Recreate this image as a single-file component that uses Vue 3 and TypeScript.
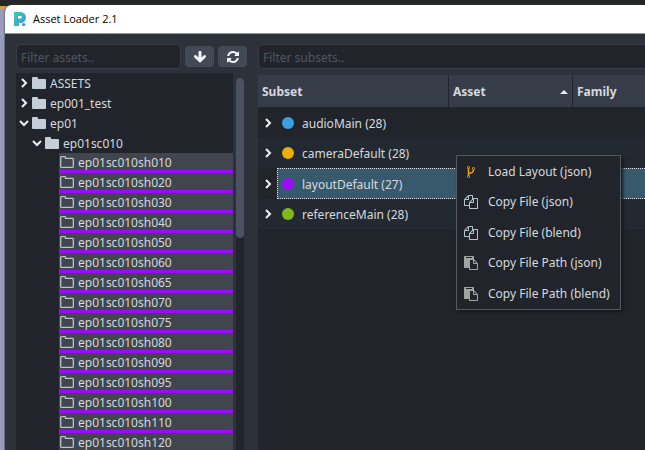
<script setup lang="ts">
import { ref } from 'vue'

interface Folder {
  name: string
  depth: number
  open: boolean
}

interface Subset {
  name: string
  color: string
}

interface Action {
  label: string
  icon: 'fork' | 'copy' | 'paste'
}

const assetFilter = ref('')
const subsetFilter = ref('')
const selected = ref('layoutDefault (27)')

const folders: Folder[] = [
  { name: 'ASSETS', depth: 0, open: false },
  { name: 'ep001_test', depth: 0, open: false },
  { name: 'ep01', depth: 0, open: true },
  { name: 'ep01sc010', depth: 1, open: true },
]

const shots: string[] = [
  '010', '020', '030', '040', '050', '060', '065', '070',
  '075', '080', '090', '095', '100', '110', '120',
].map((n) => `ep01sc010sh${n}`)

const subsets: Subset[] = [
  { name: 'audioMain (28)', color: '#3b9fe0' },
  { name: 'cameraDefault (28)', color: '#eaae05' },
  { name: 'layoutDefault (27)', color: '#9b0bff' },
  { name: 'referenceMain (28)', color: '#82b71c' },
]

const actions: Action[] = [
  { label: 'Load Layout (json)', icon: 'fork' },
  { label: 'Copy File (json)', icon: 'copy' },
  { label: 'Copy File (blend)', icon: 'copy' },
  { label: 'Copy File Path (json)', icon: 'paste' },
  { label: 'Copy File Path (blend)', icon: 'paste' },
]

const glyphs: Record<Action['icon'], string> = {
  fork: 'M672 1472q0-40-28-68t-68-28-68 28-28 68 28 68 68 28 68-28 28-68zm0-1152q0-40-28-68t-68-28-68 28-28 68 28 68 68 28 68-28 28-68zm640 128q0-40-28-68t-68-28-68 28-28 68 28 68 68 28 68-28 28-68zm96 0q0 52-26 96.5t-70 69.5q-2 287-226 414-67 38-203 81-128 40-169.5 71t-41.5 100v26q44 25 70 69.5t26 96.5q0 80-56 136t-136 56-136-56-56-136q0-52 26-96.5t70-69.5v-820q-44-25-70-69.5t-26-96.5q0-80 56-136t136-56 136 56 56 136q0 52-26 96.5t-70 69.5v497q54-26 154-57 55-17 87.5-29.5t70.5-31 59-39.5 40.5-51 28-69.5 8.5-91.5q-44-25-70-69.5t-26-96.5q0-80 56-136t136-56 136 56 56 136z',
  copy: 'M1696 384q40 0 68 28t28 68v1216q0 40-28 68t-68 28h-960q-40 0-68-28t-28-68v-288h-544q-40 0-68-28t-28-68v-672q0-40 20-88t48-76l408-408q28-28 76-48t88-20h416q40 0 68 28t28 68v328q68-40 128-40h416zm-544 213l-299 299h299v-299zm-640-384l-299 299h299v-299zm196 647l316-316v-416h-384v416q0 40-28 68t-68 28h-416v640h512v-256q0-40 20-88t48-76zm956 804v-1152h-384v416q0 40-28 68t-68 28h-416v640h896z',
  paste: 'M768 1664h896v-640h-416q-40 0-68-28t-28-68v-416h-384v1152zm256-1440v-64q0-13-9.5-22.5t-22.5-9.5h-704q-13 0-22.5 9.5t-9.5 22.5v64q0 13 9.5 22.5t22.5 9.5h704q13 0 22.5-9.5t9.5-22.5zm256 672h299l-299-299v299zm512 128v672q0 40-28 68t-68 28h-960q-40 0-68-28t-28-68v-160h-544q-40 0-68-28t-28-68v-1344q0-40 28-68t68-28h1088q40 0 68 28t28 68v328q21 13 36 28l408 408q28 28 48 76t20 88z',
}
</script>

<template>
  <div class="desktop">
    <main class="window">
      <header class="titlebar">
        <svg class="logo" viewBox="0 0 14 16" aria-hidden="true">
          <defs>
            <linearGradient id="logo-fill" x1="0" y1="0" x2="1" y2="1">
              <stop offset="0" stop-color="#3fc6b4" />
              <stop offset="1" stop-color="#3a9cdc" />
            </linearGradient>
          </defs>
          <path
            fill="url(#logo-fill)"
            fill-rule="evenodd"
            d="M1 1H7.500A5.500 5.500 0 0 1 7.500 12H6V15H1zM5 5v2.600H7.500a1.300 1.300 0 0 0 0-2.600z"
          />
          <circle cx="10.700" cy="13.600" r="1.700" fill="#3a9cdc" />
        </svg>
        <h1>Asset Loader 2.1</h1>
      </header>

      <div class="body">
        <section class="assets">
          <div class="toolbar">
            <input v-model="assetFilter" class="field" type="text" placeholder="Filter assets.." aria-label="Filter assets" />
            <button class="tool" type="button" aria-label="Go to current">
              <svg viewBox="0 0 1792 1792"><path d="M1675 832q0 53-37 90l-651 652q-39 37-91 37-53 0-90-37l-651-652q-38-36-38-90 0-53 38-91l74-75q39-37 91-37 53 0 90 37l294 294v-704q0-52 38-90t90-38h128q52 0 90 38t38 90v704l294-294q37-37 90-37 52 0 91 37l75 75q37 39 37 91z" /></svg>
            </button>
            <button class="tool" type="button" aria-label="Refresh">
              <svg viewBox="0 0 1792 1792"><path d="M1639 1056q0 5-1 7-64 268-268 434.500t-478 166.500q-146 0-282.500-55t-243.500-157l-129 129q-19 19-45 19t-45-19-19-45v-448q0-26 19-45t45-19h448q26 0 45 19t19 45-19 45l-137 137q71 66 161 102t187 36q134 0 250-65t186-179q11-17 53-117 8-23 30-23h192q13 0 22.500 9.500t9.500 22.500zm25-800v448q0 26-19 45t-45 19h-448q-26 0-45-19t-19-45 19-45l138-138q-148-137-349-137-134 0-250 65t-186 179q-11 17-53 117-8 23-30 23h-199q-13 0-22.500-9.500t-9.500-22.500v-7q65-268 270-434.500t480-166.500q146 0 284 55.500t245 156.500l130-129q19-19 45-19t45 19 19 45z" /></svg>
            </button>
          </div>

          <div class="tree-area">
            <ul class="tree">
              <li v-for="f in folders" :key="f.name" class="folder" :class="{ nested: f.depth > 0 }">
                <button class="twist" type="button" :aria-expanded="f.open" :aria-label="f.name">
                  <svg class="chevron" :class="{ open: f.open }" viewBox="0 0 10 10"><path d="M3 1l4 4-4 4" /></svg>
                </button>
                <svg class="folder-icon" viewBox="0 0 14 12"><path d="M1 0h4q1 0 1 1v1h7q1 0 1 1v8q0 1-1 1H1q-1 0-1-1V1q0-1 1-1z" /></svg>
                <span class="name">{{ f.name }}</span>
              </li>
              <li v-for="s in shots" :key="s" class="shot">
                <svg class="folder-icon outline" viewBox="0 0 14 12"><path d="M1.500 .7h3.200q.8 0 .8.800v.8h7q.8 0 .8.800v7.400q0 .8-.8.800h-11q-.8 0-.8-.8v-9q0-.8.800-.8z" /></svg>
                <span class="name">{{ s }}</span>
              </li>
            </ul>
            <div class="track"><div class="thumb"></div></div>
          </div>
        </section>

        <section class="subsets">
          <input v-model="subsetFilter" class="field wide" type="text" placeholder="Filter subsets.." aria-label="Filter subsets" />
          <table>
            <colgroup>
              <col class="col-branch" />
              <col class="col-subset" />
              <col class="col-asset" />
              <col />
            </colgroup>
            <thead>
              <tr>
                <th colspan="2" scope="col">Subset</th>
                <th scope="col">
                  <div class="sorted">
                    Asset
                    <svg viewBox="0 0 8 4"><path d="M0 4l4-4 4 4z" /></svg>
                  </div>
                </th>
                <th scope="col">Family</th>
              </tr>
            </thead>
            <tbody>
              <tr
                v-for="s in subsets"
                :key="s.name"
                :class="{ selected: s.name === selected }"
                @click="selected = s.name"
              >
                <td class="branch">
                  <button class="twist" type="button" :aria-label="s.name">
                    <svg class="chevron" viewBox="0 0 10 10"><path d="M3 1l4 4-4 4" /></svg>
                  </button>
                </td>
                <td colspan="3" class="cell">
                  <div class="subset">
                    <i class="dot" :style="{ background: s.color }"></i>
                    <span class="name">{{ s.name }}</span>
                  </div>
                </td>
              </tr>
            </tbody>
          </table>
        </section>
      </div>
    </main>

    <div class="menu" role="menu">
      <button v-for="a in actions" :key="a.label" class="action" type="button" role="menuitem">
        <svg :class="a.icon" viewBox="0 0 1792 1792"><path :d="glyphs[a.icon]" /></svg>
        <span>{{ a.label }}</span>
      </button>
    </div>
  </div>
</template>

<style>
body {
  background: #9a9cbd;
}
</style>

<style scoped>
* {
  box-sizing: border-box;
}

.desktop {
  position: relative;
  display: flex;
  height: 100vh;
  padding: 5px 0 0 5px;
  overflow: hidden;
  background: linear-gradient(#252727 6px, #d9a326 6px, #d9a326 8px, #9a9cbd 9px);
  color: #d5d9df;
  font: 12px/18px "Noto Sans", "Open Sans", sans-serif;
}

button {
  padding: 0;
  border: 0;
  background: none;
  color: inherit;
  font: inherit;
}

.window {
  flex: 1;
  display: flex;
  flex-direction: column;
  min-width: 0;
  border-radius: 7px 0 0 0;
  overflow: hidden;
  background: #2c313a;
  box-shadow: -1px 0 1px #6d7082;
}

.titlebar {
  display: flex;
  flex: none;
  align-items: center;
  gap: 6px;
  height: 29px;
  padding-left: 8px;
  border-bottom: 1px solid #8c9a98;
  background: #fff;
}

.logo {
  width: 14px;
  height: 16px;
}

h1 {
  margin: 0;
  color: #000;
  font: 11px/16px "Open Sans", "Noto Sans", sans-serif;
}

.body {
  flex: 1;
  display: flex;
  gap: 11px;
  min-height: 0;
  padding: 10px 0 0 11px;
}

.assets {
  flex: none;
  display: flex;
  flex-direction: column;
  gap: 4px;
  width: 231px;
}

.toolbar {
  display: flex;
  align-items: center;
  gap: 4px;
}

.field {
  flex: 1;
  min-width: 0;
  height: 25px;
  padding: 2px 4px 0;
  border: 1px solid #373d48;
  border-radius: 5px;
  outline: 0;
  background: #21252b;
  color: #d5d9df;
  font: inherit;
}

.field::placeholder {
  color: #50555e;
  opacity: 1;
}

.tool {
  display: flex;
  align-items: center;
  justify-content: center;
  width: 29px;
  height: 21px;
  border-radius: 4px;
  background: #434a56;
}

.tool svg {
  width: 14px;
  height: 14px;
  fill: #f5f6f7;
}

.tree-area {
  flex: 1;
  display: flex;
  gap: 3px;
  min-height: 0;
}

.tree {
  flex: 1;
  margin: 0;
  padding: 0;
  overflow: hidden;
  list-style: none;
  background: #21252b;
}

.folder {
  display: flex;
  align-items: center;
  height: 20px;
  padding-left: 3px;
}

.folder.nested {
  padding-left: 16px;
}

.name {
  padding-top: 2px;
}

.twist {
  display: flex;
  width: 10px;
  height: 10px;
}

.chevron {
  width: 10px;
  height: 10px;
  fill: none;
  stroke: #f0f2f4;
  stroke-width: 2;
}

.chevron.open {
  transform: rotate(90deg);
}

.folder-icon {
  flex: none;
  width: 14px;
  height: 12px;
  margin: 0 4px 0 3px;
  fill: #c3ced6;
}

.folder-icon.outline {
  margin-left: 1px;
  fill: none;
  stroke: #b9c4cc;
  stroke-width: 1.3;
}

.shot {
  display: flex;
  align-items: center;
  height: 20px;
  margin-left: 43px;
  border-bottom: 3px solid #9b0bff;
  background: #41454d;
}

.track {
  width: 8px;
  margin-top: 5px;
  margin-right: 3px;
  border-radius: 4px 4px 0 0;
  background: #21252b;
}

.thumb {
  height: 43%;
  border-radius: 4px;
  background: #4c5263;
}

.subsets {
  flex: 1;
  display: flex;
  flex-direction: column;
  gap: 6px;
  min-width: 0;
  background: linear-gradient(#2c313a 31px, #21252b 31px);
}

.wide {
  flex: none;
  border-right: 0;
  border-radius: 5px 0 0 5px;
}

table {
  width: 100%;
  table-layout: fixed;
  border-collapse: separate;
  border-spacing: 0;
}

.col-branch {
  width: 19px;
}

.col-subset {
  width: 172px;
}

.col-asset {
  width: 124px;
}

th {
  height: 32px;
  padding: 2px 4px 0;
  border-right: 1px solid #21252b;
  background: #373d48;
  font-weight: 700;
  text-align: left;
}

th:last-child {
  border-right: 0;
}

.sorted {
  display: flex;
  align-items: center;
  justify-content: space-between;
}

.sorted svg {
  width: 8px;
  height: 4px;
  fill: #e8eaed;
}

td {
  height: 31px;
  padding: 0;
  background: #21252b;
}

tr:nth-child(even) td {
  height: 30px;
  background: #232930;
}

.branch {
  padding-left: 5px;
}

.subset {
  display: flex;
  align-items: center;
  gap: 8px;
  padding-left: 5px;
}

.selected .cell {
  border: 1px dotted #d5dde2;
  border-right: 0;
  background: #38596c;
}

.selected .subset {
  padding-left: 4px;
}

.dot {
  width: 12px;
  height: 12px;
  border-radius: 50%;
}

.menu {
  position: absolute;
  top: 155px;
  left: 456px;
  display: flex;
  flex-direction: column;
  min-width: 165px;
  border: 1px solid #55585c;
  background: #21252b;
  box-shadow: 2px 2px 3px #15181c;
}

.action {
  display: flex;
  align-items: center;
  gap: 10px;
  height: 31px;
  padding: 0 6px 0 7px;
  text-align: left;
}

.action:nth-child(even) {
  height: 30px;
}

.action svg {
  width: 14px;
  height: 14px;
}

.fork {
  fill: #f0a30a;
}

.copy {
  fill: #b5c3cc;
}

.paste {
  fill: #a3a3a3;
}
</style>
